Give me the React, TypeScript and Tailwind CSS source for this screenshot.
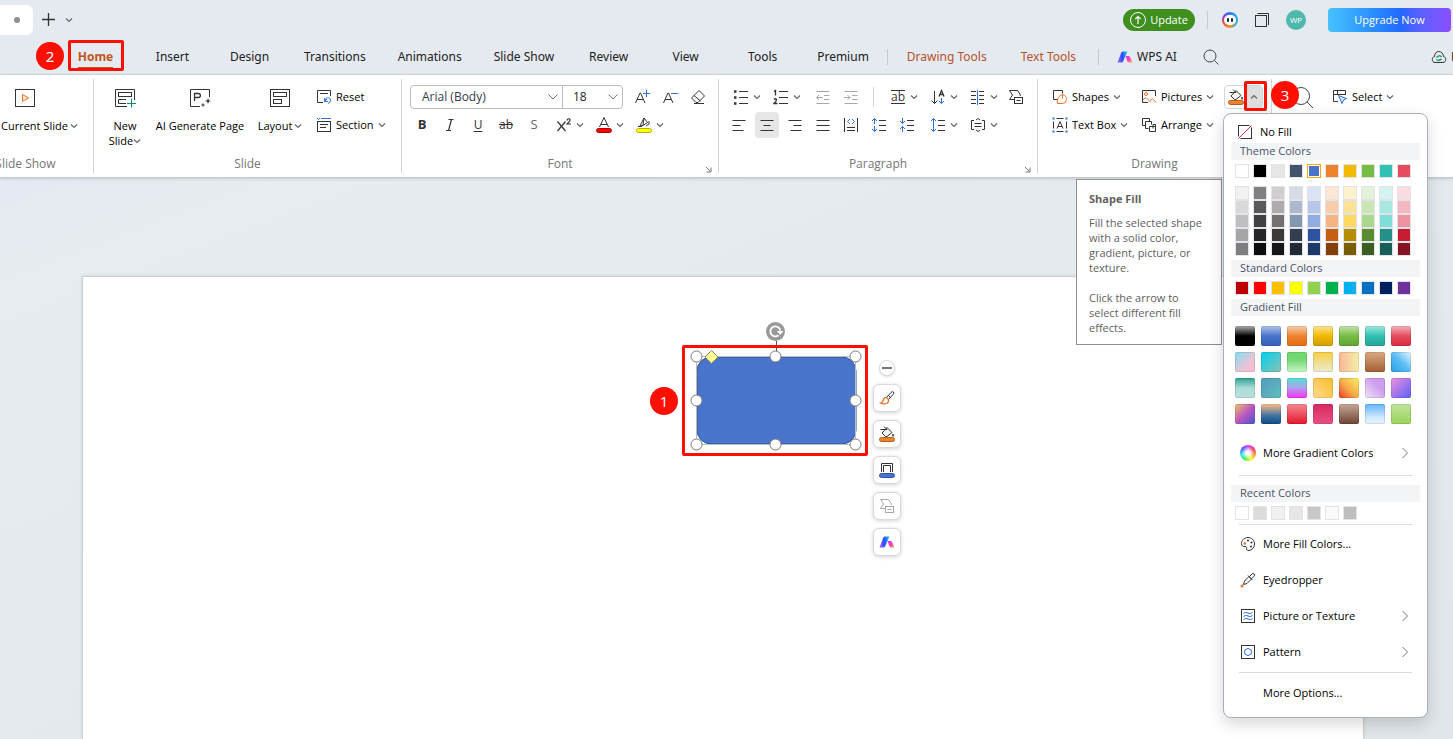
import React, { useState } from "react";

type IconProps = { children: React.ReactNode; w?: number; h?: number; color?: string };

const BLUE = "#2b6fe0";
const ORANGE = "#e5722a";

// Line icon base, one unit is one pixel
function Icon({ children, w = 16, h = 16, color = "#333" }: IconProps) {
  return (
    <svg width={w} height={h} viewBox={`0 0 ${w} ${h}`} fill="none" stroke={color} className="shrink-0" aria-hidden="true">
      {children}
    </svg>
  );
}

function Caret({ up = false }: { up?: boolean }) {
  return (
    <Icon w={8} h={6} color="#666">
      <path d={up ? "M1 4.5 4 1.5 7 4.5" : "M1 1.5 4 4.5 7 1.5"} strokeWidth="1.2" />
    </Icon>
  );
}

function ChevronRight() {
  return (
    <Icon w={8} h={12} color="#777">
      <path d="M1.5 1 6.5 6 1.5 11" />
    </Icon>
  );
}

function AiLogo() {
  return (
    <svg width="16" height="12" viewBox="0 0 16 12" className="shrink-0" aria-hidden="true">
      <defs>
        <linearGradient id="aiBlue" x1="0" y1="0.6" x2="1" y2="0.4">
          <stop offset="0" stopColor="#8a6cff" />
          <stop offset="0.5" stopColor="#2f47ff" />
          <stop offset="1" stopColor="#19c8ff" />
        </linearGradient>
        <linearGradient id="aiPink" x1="0" y1="0" x2="1" y2="1">
          <stop offset="0" stopColor="#c43cff" />
          <stop offset="0.5" stopColor="#ff3cb0" />
          <stop offset="1" stopColor="#ffb86b" />
        </linearGradient>
      </defs>
      <path d="M4.5 1Q5 .5 6 .5H10.5L6 10.5Q5.5 11.5 4.5 11.5H.5Z" fill="url(#aiBlue)" />
      <path d="M8.5 5H11.5Q12.5 5 13 6L15.5 11.5H12Q11 11.5 10.5 10.5Z" fill="url(#aiPink)" />
    </svg>
  );
}

function BucketIcon() {
  return (
    <Icon w={18} h={18}>
      <path d="M2.5 4.5H9M9 2.5 14 7.5 9 11.5H7.5L4 8 9 2.5Z" fill="#f3f3ee" />
      <path d="M6 1.5 9 4.5" />
      <path d="M15 9V11.5" strokeWidth="1.5" />
      <rect x="1.5" y="12.5" width="15" height="4" rx="2" fill="#ee822f" stroke="#b45f1a" />
    </Icon>
  );
}

function ConvertIcon({ color = "#333" }: { color?: string }) {
  return (
    <Icon color={color}>
      <path d="M7 10.5H1.5L4.5 6 1.5 1.5H9.5L12.5 6 12 7" />
      <rect x="6.5" y="8.5" width="8" height="6" />
      <path d="M8.5 11.5H12.5" />
    </Icon>
  );
}

function Badge({ n, className }: { n: number; className: string }) {
  return (
    <span
      className={`absolute z-40 flex h-7 w-7 items-center justify-center rounded-full bg-[#ff0f00] text-[15px] font-normal text-white ${className}`}
    >
      {n}
    </span>
  );
}

function Group({ label, className = "", launcher = false, children }: { label: string; className?: string; launcher?: boolean; children?: React.ReactNode }) {
  return (
    <section className={`relative my-1 flex shrink-0 flex-col border-r border-[#d4d4d4] pt-1 ${className}`}>
      <div className="h-[68px]">{children}</div>
      <div className="mt-1 text-center text-[12px] leading-[18px] text-[#767676]">{label}</div>
      {launcher && (
        <button aria-label={`${label} settings`} className="absolute right-1.5 bottom-0">
          <Icon w={7} h={7} color="#777">
            <path d="M1 1 5.5 5.5M6 1.5V6H1.5" />
          </Icon>
        </button>
      )}
    </section>
  );
}

function BigButton({ icon, children, className = "" }: { icon: React.ReactNode; children: React.ReactNode; className?: string }) {
  return (
    <button className={`flex shrink-0 flex-col items-center whitespace-nowrap ${className}`}>
      <span className="flex h-7 items-center pt-0.5">{icon}</span>
      <span className="mt-[7px] leading-[15px]">{children}</span>
    </button>
  );
}

function TextButton({ icon, label, caret = false }: { icon: React.ReactNode; label: string; caret?: boolean }) {
  return (
    <button className="flex h-7 items-center whitespace-nowrap">
      {icon}
      <span className="ml-1">{label}</span>
      {caret && (
        <span className="ml-1">
          <Caret />
        </span>
      )}
    </button>
  );
}

function Tool({ label, children, active = false }: { label: string; children: React.ReactNode; active?: boolean }) {
  return (
    <button aria-label={label} className="flex h-7 w-7 shrink-0 items-center justify-center">
      <span className={`flex h-[26px] w-6 items-center justify-center rounded ${active ? "bg-[#e6e6e6]" : ""}`}>{children}</span>
    </button>
  );
}

function SplitTool({ label, children }: { label: string; children: React.ReactNode }) {
  return (
    <button aria-label={label} className="flex h-7 w-10 shrink-0 items-center pl-1">
      <span className="flex w-6 justify-center">{children}</span>
      <Caret />
    </button>
  );
}

const tabs = ["Home", "Insert", "Design", "Transitions", "Animations", "Slide Show", "Review", "View", "Tools", "Premium"];
const contextTabs = ["Drawing Tools", "Text Tools"];

const themeColors = ["#ffffff", "#000000", "#e7e6e6", "#44546a", "#4874cb", "#ee822f", "#f2ba02", "#75bd42", "#30c0b4", "#e54c5e"];

const themeShades = [
  ["#f2f2f2", "#808080", "#d0cece", "#d6dce5", "#dae3f5", "#fce6d5", "#fff1cb", "#e3f2d9", "#d4f3f1", "#fadbdf"],
  ["#d9d9d9", "#595959", "#afabab", "#adb9ca", "#b6c7ea", "#f8cdac", "#fee396", "#c8e5b3", "#a8e8e2", "#f5b7bf"],
  ["#bfbfbf", "#404040", "#767171", "#8497b0", "#91ace0", "#f5b482", "#fed961", "#acd78e", "#7fded6", "#ef949e"],
  ["#a6a6a6", "#262626", "#3b3838", "#333f50", "#2e54a1", "#c75f10", "#b68c02", "#588e31", "#249087", "#c81d31"],
  ["#7f7f7f", "#0d0d0d", "#171717", "#222a35", "#1e386b", "#853f0b", "#795d01", "#3a5e21", "#185f5a", "#851321"],
];

const standardColors = ["#c00000", "#ff0000", "#ffc000", "#ffff00", "#92d050", "#00b050", "#00b0f0", "#0070c0", "#002060", "#7030a0"];

const recentColors = ["#ffffff", "#dcdcdc", "#f0f0f0", "#e6e6e6", "#c8c8c8", "#fafafa", "#bebebe"];

const gradients = [
  "linear-gradient(180deg,#b0b0b0,#000 50%)",
  "linear-gradient(180deg,#b0c2ea,#4874cb 50%,#3660b8)",
  "linear-gradient(180deg,#f8cfae,#ee822f 50%,#e26c12)",
  "linear-gradient(180deg,#fce496,#f2ba02 50%,#cf9e00)",
  "linear-gradient(180deg,#c4e2ae,#75bd42 50%,#63a436)",
  "linear-gradient(180deg,#a4e8e0,#30c0b4 50%,#28a297)",
  "linear-gradient(180deg,#f4b4bc,#e54c5e 50%,#dd2a40)",
  "linear-gradient(135deg,#7fdff0,#e8c4d8 60%,#ffbccc)",
  "linear-gradient(135deg,#00d2f0,#8cbfb4)",
  "linear-gradient(180deg,#70d670 35%,#c4f6c4)",
  "linear-gradient(180deg,#f8d040,#f0da80 40%,#ecead0)",
  "linear-gradient(90deg,#fbb898,#f4efa6)",
  "linear-gradient(180deg,#daa882,#a35f32)",
  "linear-gradient(45deg,#28a0e8,#5cbcf4 50%,#e8faff)",
  "linear-gradient(180deg,#2ca096,#aedcd8 50%,#b6e0dc)",
  "linear-gradient(135deg,#5898bc,#5cc0bc)",
  "linear-gradient(180deg,#50e0d8,#a8a8e8 45%,#f830f8)",
  "linear-gradient(45deg,#ffda90,#fcbc28)",
  "linear-gradient(45deg,#e83828,#f8a848 45%,#f8f060)",
  "linear-gradient(45deg,#f0e4fa,#cc9cf0 65%)",
  "linear-gradient(135deg,#f090dc,#5c60fc)",
  "linear-gradient(135deg,#f4c464,#bc58c0 50%,#4454d0)",
  "linear-gradient(180deg,#fcbc88,#3c70a0 60%,#104c84)",
  "linear-gradient(180deg,#f48890,#e4182c)",
  "linear-gradient(180deg,#d82860,#e85084)",
  "linear-gradient(180deg,#c8a898,#6c4434)",
  "linear-gradient(180deg,#64b4ff,#d4eaff 70%,#e4f2ff)",
  "linear-gradient(180deg,#c0e49c,#98d458)",
];

function Swatches({ colors, selected }: { colors: string[]; selected?: string }) {
  return (
    <div className="flex gap-1 pl-[11px]">
      {colors.map((c) => (
        <button
          key={c}
          aria-label={c}
          className={`h-[14px] w-[14px] border ${c === selected ? "border-[#ffa500] p-px" : "border-[#e1e3e8]"}`}
        >
          <span className="block h-full w-full" style={{ backgroundColor: c }} />
        </button>
      ))}
    </div>
  );
}

function MenuHeader({ children }: { children: React.ReactNode }) {
  return <h3 className="mx-[7px] bg-[#f3f4f6] pb-0.5 pl-[9px] leading-[15px] text-[#4b5468]">{children}</h3>;
}

function MenuItem({ icon, label, arrow = false }: { icon?: React.ReactNode; label: string; arrow?: boolean }) {
  return (
    <button className="flex h-9 w-full items-center pr-[18px] pl-4 text-left">
      <span className="flex w-4 justify-center">{icon}</span>
      <span className="ml-[7px] flex-1">{label}</span>
      {arrow && <ChevronRight />}
    </button>
  );
}

function FillMenu() {
  return (
    <div className="absolute top-7 -left-px z-30 w-[205px] rounded-lg border border-[#a9b0ba] bg-white pt-2 pb-1.5 text-black shadow-[0_6px_16px_rgba(0,0,0,0.16)]">
      <button className="flex h-[21px] w-full items-center pl-[14px]">
        <Icon w={15} h={15}>
          <rect x="0.5" y="0.5" width="13" height="13" />
          <path d="M0 14 14 0" stroke="#fff" strokeWidth="3" />
          <path d="M.5 13.5 13.5 .5" stroke="#d9304c" />
        </Icon>
        <span className="ml-[7px]">No Fill</span>
      </button>
      <MenuHeader>Theme Colors</MenuHeader>
      <div className="mt-1">
        <Swatches colors={themeColors} selected="#4874cb" />
      </div>
      <div className="mt-2 flex flex-col">
        {themeShades.map((row) => (
          <Swatches key={row[0]} colors={row} />
        ))}
      </div>
      <div className="mt-1">
        <MenuHeader>Standard Colors</MenuHeader>
      </div>
      <div className="mt-1 mb-1">
        <Swatches colors={standardColors} />
      </div>
      <MenuHeader>Gradient Fill</MenuHeader>
      <div className="mt-[10px] mb-[11px] flex flex-wrap gap-1.5 pl-[11px]">
        {gradients.map((g) => (
          <button key={g} aria-label="Gradient" className="h-5 w-5 rounded-xs border border-black/10 bg-origin-border" style={{ backgroundImage: g }} />
        ))}
      </div>
      <MenuItem
        label="More Gradient Colors"
        arrow
        icon={
          <span className="h-4 w-4 shrink-0 rounded-full bg-[radial-gradient(circle,#fff_15%,transparent_60%),conic-gradient(#d040ff,#ff3060,#ff9030,#f0ff30,#40f040,#30e0f0,#4060ff,#d040ff)]" />
        }
      />
      <hr className="mx-[15px] mt-1 mb-[9px] border-[#d9dbde]" />
      <MenuHeader>Recent Colors</MenuHeader>
      <div className="my-1">
        <Swatches colors={recentColors} />
      </div>
      <hr className="mx-[15px] mb-px border-[#d9dbde]" />
      <MenuItem
        label="More Fill Colors..."
        icon={
          <Icon>
            <path d="M8 1.5C4 1.5 1.5 4.5 1.5 7.5C1.5 10 3.5 11 5 10.5C6.5 10.2 6.8 11.5 6.5 12.5C6.5 14 7.5 14.5 9 14.5C12 14 14.5 11.5 14.5 8C14.5 4 11.5 1.5 8 1.5Z" />
            <g stroke="none" fill="#333">
              <circle cx="8" cy="4.5" r="1" />
              <circle cx="11.5" cy="6.5" r="1" />
              <circle cx="11" cy="10.5" r="1" />
              <circle cx="4.8" cy="7.5" r="1.3" fill={ORANGE} />
            </g>
          </Icon>
        }
      />
      <MenuItem
        label="Eyedropper"
        icon={
          <Icon>
            <path d="M3.5 12.5 4.5 9 9 4.5 11.5 7 7 11.5ZM8 3.5 12.5 8M9.5 4.5 12 2Q13 1 14.2 2Q15.2 3.2 14 4.3L11.8 6.5" />
            <circle cx="2" cy="14" r="1.5" fill={ORANGE} stroke="none" />
          </Icon>
        }
      />
      <MenuItem
        label="Picture or Texture"
        arrow
        icon={
          <Icon>
            <rect x="1.5" y="1.5" width="13" height="13" />
            <path d="M3.5 5.5Q5.5 3.5 8 5T12.5 4.5M3.5 8.5Q5.5 6.5 8 8T12.5 7.5M3.5 11.5Q5.5 9.5 8 11T12.5 10.5" stroke={BLUE} />
          </Icon>
        }
      />
      <MenuItem
        label="Pattern"
        arrow
        icon={
          <Icon>
            <rect x="1.5" y="1.5" width="13" height="13" />
            <path d="M8 4.3 11.3 6.2V9.8L8 11.7 4.7 9.8V6.2Z" stroke={BLUE} />
          </Icon>
        }
      />
      <hr className="mx-[15px] my-0.5 border-[#d9dbde]" />
      <MenuItem label="More Options..." />
    </div>
  );
}

function FillTooltip() {
  return (
    <div role="tooltip" className="absolute top-[94px] right-[41px] z-20 w-[146px] border border-[#8f8f8f] bg-white px-3 pt-[11px] pb-[9px] leading-[15px] text-[#606060]">
      <p className="font-bold">Shape Fill</p>
      <p className="mt-[9px]">Fill the selected shape with a solid color, gradient, picture, or texture.</p>
      <p className="mt-[15px]">Click the arrow to select different fill effects.</p>
    </div>
  );
}

function TitleBar() {
  return (
    <header className="flex h-10 shrink-0 items-center">
      <div className="flex h-[30px] w-[33px] items-center justify-center rounded-r-md bg-white">
        <span className="h-1.5 w-1.5 rounded-full bg-[#909090]" />
      </div>
      <button aria-label="New tab" className="ml-2">
        <Icon>
          <path d="M7.5 1V14M1 7.5H14" strokeWidth="1.3" />
        </Icon>
      </button>
      <button aria-label="Tab list" className="ml-2">
        <Caret />
      </button>
      <button className="ml-auto flex h-[22px] w-[72px] items-center justify-center gap-1 rounded-full bg-[#3f8f1f] text-white">
        <Icon color="#fff">
          <circle cx="8" cy="8" r="7.5" />
          <path d="M8 12V4.5M5.3 7 8 4.5 10.7 7" strokeWidth="1.2" />
        </Icon>
        Update
      </button>
      <span className="ml-3 h-[18px] w-px bg-[#c6cacf]" />
      <button aria-label="Assistant" className="ml-[14px] flex h-4 w-4 items-center justify-center rounded-full bg-[conic-gradient(#2f7bf0,#20a8e8,#30b0c8,#f09838,#f0503c,#8a40d8,#2f7bf0)]">
        <span className="flex h-2.5 w-3 items-center justify-center gap-0.5 rounded-full bg-white">
          <span className="h-1 w-0.5 rounded-full bg-[#223]" />
          <span className="h-1 w-0.5 rounded-full bg-[#223]" />
        </span>
      </button>
      <button aria-label="Windows" className="ml-4">
        <Icon>
          <rect x="1.5" y="3.5" width="11" height="11" />
          <path d="M3.5 1.5H14.5V13" />
        </Icon>
      </button>
      <span className="ml-4 flex h-5 w-5 items-center justify-center rounded-full bg-[#4db8ac] text-[8px] text-white">WP</span>
      <button className="mr-0.5 ml-[22px] h-6 w-[123px] rounded bg-linear-to-r from-[#48c2ff] via-[#2468ff] via-60% to-[#8a4dff] text-white">Upgrade Now</button>
    </header>
  );
}

function TabBar() {
  return (
    <nav className="flex h-[34px] shrink-0 items-center overflow-x-clip pl-[57px] font-['Noto_Sans',sans-serif] text-[12px] text-[#222]">
      {tabs.map((tab) =>
        tab === "Home" ? (
          <div key={tab} className="relative flex h-full min-w-[77px] items-center justify-center">
            <a href="#home" className="relative font-bold text-[#c2571a]">
              {tab}
              <span className="absolute inset-x-0 -bottom-[3px] h-0.5 bg-[#c2571a]" />
            </a>
            <span className="absolute top-0 left-[11px] h-[31px] w-14 rounded-xs border-3 border-[#ff0f00]" />
            <Badge n={2} className="top-0.5 -left-[21px]" />
          </div>
        ) : (
          <a key={tab} href="#tab" className="min-w-[77px] px-4 text-center whitespace-nowrap">
            {tab}
          </a>
        ),
      )}
      <span className="mr-0.5 ml-0.5 h-4 w-px bg-[#c6cacf]" />
      {contextTabs.map((tab) => (
        <a key={tab} href="#context" className="px-[17px] whitespace-nowrap text-[#b5532a]">
          {tab}
        </a>
      ))}
      <span className="ml-[5px] h-4 w-px bg-[#c6cacf]" />
      <button className="ml-[18px] flex items-center gap-1 whitespace-nowrap">
        <AiLogo />
        WPS AI
      </button>
      <button aria-label="Search" className="ml-[26px]">
        <Icon color="#444">
          <circle cx="7" cy="7" r="6" />
          <path d="M11.5 11.5 15.5 15.5" />
        </Icon>
      </button>
      <button aria-label="Cloud sync" className="-mr-2.5 ml-auto flex items-center gap-1">
        <Icon>
          <path d="M4 13.5C.5 13.5 .5 8 3.5 7.5C3.5 .8 12 .8 12.5 7.5C15.5 8 15.5 13.5 12 13.5Z" />
          <path d="M5.5 8.5Q8 5.5 10.5 8M10.5 10Q8 12.5 5.5 10.5" stroke="#1f9d63" strokeWidth="1.5" />
        </Icon>
        <span className="w-3">File</span>
      </button>
    </nav>
  );
}

function SlideGroup() {
  return (
    <Group label="Slide" className="w-[308px]">
      <div className="flex pl-[9px]">
        <BigButton
          className="w-11"
          icon={
            <Icon w={22} h={20}>
              <path d="M13 18.5H1.5V1.5H20.5V12" />
              <rect x="4.5" y="4.5" width="13" height="4" />
              <path d="M12 11.5H4.5V15.5H12" />
              <path d="M17.5 10.5V19.5M13 15.5H22" stroke="#0b8f62" />
            </Icon>
          }
        >
          New
          <br />
          <span className="inline-flex items-center">
            Slide
            <Caret />
          </span>
        </BigButton>
        <BigButton
          className="w-[106px]"
          icon={
            <Icon w={24} h={20}>
              <path d="M12 18.5H2.5V1.5H21.5V9" />
              <path d="M6.5 13V5.5H10.5C13 5.5 13 9.5 10.5 9.5H6.5" strokeWidth="1.3" />
              <path d="M20 10 20.8 12.2 23 13 20.8 13.8 20 16 19.2 13.8 17 13 19.2 12.2ZM15 14.5 15.6 16.4 17.5 17 15.6 17.6 15 19.5 14.4 17.6 12.5 17 14.4 16.4Z" fill="#333" stroke="none" />
            </Icon>
          }
        >
          AI Generate Page
        </BigButton>
        <BigButton
          className="w-[54px]"
          icon={
            <Icon w={22} h={20}>
              <rect x="1.5" y="1.5" width="19" height="17" />
              <rect x="4.5" y="4.5" width="13" height="4" />
              <rect x="4.5" y="11.5" width="8" height="4" />
            </Icon>
          }
        >
          <span className="flex items-center gap-0.5">
            Layout
            <Caret />
          </span>
        </BigButton>
        <div className="ml-[9px]">
          <TextButton
            label="Reset"
            icon={
              <Icon>
                <path d="M7 13.5H1.5V1.5H14.5V7M4 4.5H12" />
                <path d="M8.5 12.5 11 10M8.5 12.5H12M8.5 12.5V9M9 12C9 8 14.5 7.5 14.5 11Q14.5 13.5 12 14.5" stroke={BLUE} />
              </Icon>
            }
          />
          <TextButton
            label="Section"
            caret
            icon={
              <Icon>
                <path d="M5 1.5H15M1 1 2.5 2.5 4 1" stroke={BLUE} />
                <rect x="1.5" y="4.5" width="13" height="10" />
                <path d="M4 7.5H12M4 10.5H10" />
              </Icon>
            }
          />
        </div>
      </div>
    </Group>
  );
}

function FontGroup() {
  return (
    <Group label="Font" launcher className="w-[317px]">
      <div className="flex h-7 items-center pl-2">
        <div className="mr-[5px] flex h-6 w-[213px] rounded border border-[#bdbdbd] text-[12px] text-[#333a4a]">
          <label className="relative flex-1">
            <select aria-label="Font name" className="h-full w-full appearance-none pl-[11px]">
              <option>Arial (Body)</option>
            </select>
            <span className="pointer-events-none absolute top-2 right-1">
              <Icon w={10} h={6} color="#777">
                <path d="M.5 .5 5 5 9.5 .5" />
              </Icon>
            </span>
          </label>
          <label className="relative w-[60px] border-l border-[#bdbdbd] text-[#222]">
            <select aria-label="Font size" className="h-full w-full appearance-none pl-[10px]">
              <option>18</option>
            </select>
            <span className="pointer-events-none absolute top-2 right-1">
              <Icon w={10} h={6} color="#777">
                <path d="M.5 .5 5 5 9.5 .5" />
              </Icon>
            </span>
          </label>
        </div>
        <Tool label="Increase font size">
          <Icon>
            <path d="M1.5 14 6 4H6.5L11 14M3 10.5H9.5" />
            <path d="M12.5 1V8M9 4.5H16" stroke={BLUE} />
          </Icon>
        </Tool>
        <Tool label="Decrease font size">
          <Icon>
            <path d="M1.5 14 6 4H6.5L11 14M3 10.5H9.5" />
            <path d="M9 4.5H16" stroke={BLUE} />
          </Icon>
        </Tool>
        <Tool label="Clear formatting">
          <Icon>
            <path d="M1.5 9 9 1.5 14.5 7 8 13.5H6ZM4 6.5 10.5 12M4 14.5H14" />
          </Icon>
        </Tool>
      </div>
      <div className="flex h-7 items-center pl-1.5 text-[12px] text-[#333]">
        <Tool label="Bold">
          <b className="text-[13px]">B</b>
        </Tool>
        <Tool label="Italic">
          <Icon>
            <path d="M6.5 2.5H11.5M4 13.5H9M9.5 2.5 6.5 13.5" strokeWidth="1.2" />
          </Icon>
        </Tool>
        <Tool label="Underline">
          <span className="underline underline-offset-2">U</span>
        </Tool>
        <Tool label="Strikethrough">
          <span className="line-through">ab</span>
        </Tool>
        <Tool label="Shadow">
          <span className="text-[13px] text-[#666]">S</span>
        </Tool>
        <SplitTool label="Superscript">
          <Icon>
            <path d="M1.5 4.5 9.5 14M9.5 4.5 1.5 14" strokeWidth="1.2" />
            <path d="M11 3.5Q11.5 1.5 13 1.8Q14.8 2.5 13.5 4.3L11 7H15" strokeWidth="1.2" />
          </Icon>
        </SplitTool>
        <SplitTool label="Font color">
          <Icon w={18} h={18}>
            <path d="M4.5 11 9 1.5 13.5 11M6 8.5H12" />
            <rect x="1.5" y="12.5" width="15" height="4" rx="2" fill="#f00" stroke="#b00000" />
          </Icon>
        </SplitTool>
        <SplitTool label="Highlight">
          <Icon w={18} h={18}>
            <path d="M3 10.5H7M5 10 9 2 12.5 6.5 8 9.5 5 10M9 2 8 9M14 5V8L11 10" />
            <rect x="1.5" y="12.5" width="15" height="4" rx="2" fill="#ff0" stroke="#b5b500" />
          </Icon>
        </SplitTool>
      </div>
    </Group>
  );
}

function ParagraphGroup() {
  return (
    <Group label="Paragraph" launcher className="w-[319px]">
      <div className="flex h-7 items-center pl-1.5">
        <SplitTool label="Bullets">
          <Icon>
            <path d="M6 2.5H15M6 8.5H15M6 14.5H15" />
            <path d="M1 2.5H3.5M1 8.5H3.5M1 14.5H3.5" strokeWidth="2.5" />
          </Icon>
        </SplitTool>
        <SplitTool label="Numbering">
          <Icon>
            <path d="M6 2.5H15M6 8.5H15M6 14.5H15" />
            <path d="M1 2.5 2.5 1.5V6.5M1 10.5Q2.5 9 3.5 10.5Q3.8 11.5 1 14.5H4.5" strokeWidth="1.3" />
          </Icon>
        </SplitTool>
        <span className="w-1" />
        <Tool label="Decrease indent">
          <Icon color="#a8a8a8">
            <path d="M1.5 2.5H14.5M9 6.5H14.5M9 10.5H14.5M1.5 14.5H14.5M1.5 8.5H7.5M4 6 1.5 8.5 4 11" />
          </Icon>
        </Tool>
        <Tool label="Increase indent">
          <Icon color="#a8a8a8">
            <path d="M1.5 2.5H14.5M9 6.5H14.5M9 10.5H14.5M1.5 14.5H14.5M1 8.5H7M4.5 6 7 8.5 4.5 11" />
          </Icon>
        </Tool>
        <span className="mx-2 h-5 w-px bg-[#d4d4d4]" />
        <SplitTool label="Text direction">
          <span className="w-[14px] border-y border-[#333] text-center text-[12px] leading-[12px] text-[#333]">ab</span>
        </SplitTool>
        <SplitTool label="Sort">
          <Icon>
            <path d="M4.5 2V14.5M1.5 11.5 4.5 14.5 7.5 11.5" />
            <path d="M9 7.5 11.5 1.5 14 7.5M10 5.5H13" strokeWidth="1.3" />
            <path d="M11.5 9V14.5M9 12 11.5 14.5 14 12" stroke={BLUE} />
          </Icon>
        </SplitTool>
        <SplitTool label="Columns">
          <Icon>
            <path d="M1 2.5H6M1 6.5H6M1 10.5H6M1 14.5H6M9 2.5H14M9 6.5H14M9 10.5H14M9 14.5H14" />
            <path d="M7.5 1V16" stroke={BLUE} />
          </Icon>
        </SplitTool>
        <Tool label="Convert to diagram">
          <ConvertIcon />
        </Tool>
      </div>
      <div className="flex h-7 items-center pl-1.5">
        <Tool label="Align left">
          <Icon>
            <path d="M1.5 3.5H14.5M1.5 8.5H9.5M1.5 13.5H12.5" />
          </Icon>
        </Tool>
        <Tool label="Center" active>
          <Icon>
            <path d="M1.5 3.5H14.5M4.5 8.5H11.5M1.5 13.5H14.5" />
          </Icon>
        </Tool>
        <Tool label="Align right">
          <Icon>
            <path d="M1.5 3.5H14.5M6.5 8.5H14.5M3.5 13.5H14.5" />
          </Icon>
        </Tool>
        <Tool label="Justify">
          <Icon>
            <path d="M1.5 3.5H14.5M1.5 8.5H14.5M1.5 13.5H14.5" />
          </Icon>
        </Tool>
        <Tool label="Distribute">
          <Icon>
            <path d="M1.5 1V15M14.5 1V15M4 10.5H12M4 13.5H12" />
            <path d="M7 2 4.5 4.5 7 7M9 2 11.5 4.5 9 7" stroke={BLUE} />
          </Icon>
        </Tool>
        <Tool label="Increase spacing">
          <Icon>
            <path d="M8 3.5H15M8 8.5H15M8 13.5H15" />
            <path d="M3.5 7V1.5M1 4 3.5 1.5 6 4M3.5 9V14.5M1 12 3.5 14.5 6 12" stroke={BLUE} />
          </Icon>
        </Tool>
        <Tool label="Decrease spacing">
          <Icon>
            <path d="M8 3.5H15M8 8.5H15M8 13.5H15" />
            <path d="M3.5 1V6.5M1 4 3.5 6.5 6 4M3.5 15V9.5M1 12 3.5 9.5 6 12" stroke={BLUE} />
          </Icon>
        </Tool>
        <span className="w-px" />
        <SplitTool label="Line spacing">
          <Icon>
            <path d="M8 3.5H15M8 8.5H15M8 13.5H15" />
            <path d="M3.5 1.5V14.5M1 4 3.5 1.5 6 4M1 12 3.5 14.5 6 12" stroke={BLUE} />
          </Icon>
        </SplitTool>
        <SplitTool label="Align text">
          <Icon>
            <path d="M4 3.5H1.5V12.5H4M12 3.5H14.5V12.5H12M4.5 6.5H11.5M4.5 9.5H11.5M6 3 8 1.5 10 3M6 13 8 14.5 10 13" />
          </Icon>
        </SplitTool>
      </div>
    </Group>
  );
}

function DrawingGroup() {
  const [open, setOpen] = useState(true);

  return (
    <Group label="Drawing" className="w-[234px]">
      <div className="flex pl-[14px]">
        <div className="w-[89px]">
          <TextButton
            label="Shapes"
            caret
            icon={
              <Icon>
                <path d="M5.5 10.5H1.5V1.5H10.5V4.5" />
                <path d="M10.5 14.5H5.5C4.5 10 7 6.5 10.5 5.5V9.5M10.5 5.5C13.5 6.5 14.5 8 14.5 10.5Q14.5 14.5 10.5 14.5" stroke={ORANGE} />
              </Icon>
            }
          />
          <TextButton
            label="Text Box"
            caret
            icon={
              <Icon>
                <path d="M1.5 4.5V11.5M14.5 4.5V11.5M4.5 1.5H11.5M4.5 14.5H11.5M5 11.5 8 4.5 11 11.5M6 9.5H10" />
                <path d="M.5 1.5H2.5M13.5 1.5H15.5M.5 14.5H2.5M13.5 14.5H15.5" stroke={BLUE} strokeWidth="2" />
              </Icon>
            }
          />
        </div>
        <div className="w-[83px]">
          <TextButton
            label="Pictures"
            caret
            icon={
              <Icon>
                <path d="M7 13.5H1.5V1.5H14.5V7" />
                <circle cx="5" cy="5" r="1.5" stroke={ORANGE} />
                <path d="M2 10.5 5 8.5 10 13.5M9 11.5 11.5 9.5 15 13.5" stroke={ORANGE} />
              </Icon>
            }
          />
          <TextButton
            label="Arrange"
            caret
            icon={
              <Icon>
                <path d="M4.5 8.5H1.5V1.5H8.5V4.5M10.5 7.5V4.5H4.5V11.5H7.5M12 11.5V7.5H14.5V14.5H8.5V9.5H14" />
              </Icon>
            }
          />
        </div>
        <div className="relative mt-0.5 h-6">
          <div className="flex h-6 w-[39px] overflow-hidden rounded border border-[#d4d4d4]">
            <button aria-label="Shape fill" className="flex flex-1 items-center justify-center pl-0.5">
              <BucketIcon />
            </button>
            <button aria-label="Fill options" aria-expanded={open} className="flex w-[17px] items-center justify-center bg-[#dedede]" onClick={() => setOpen(!open)}>
              <Caret up />
            </button>
          </div>
          <span className="pointer-events-none absolute -top-1 left-5 z-10 h-[30px] w-[23px] rounded-xs border-3 border-[#ff0f00]" />
          <Badge n={3} className="-top-1 left-[47px]" />
          {open && <FillTooltip />}
          {open && <FillMenu />}
        </div>
      </div>
    </Group>
  );
}

function Ribbon() {
  return (
    <div className="relative z-10 flex h-[104px] shrink-0 border-y border-t-[#cfd3d8] border-b-[#c3c8cd] bg-white text-black shadow-[0_1px_3px_rgba(0,0,0,0.14)]">
      {/* First group is scrolled partly out on the left */}
      <Group label="Slide Show" className="-ml-[42px] w-[136px]">
        <div className="flex pl-[43px]">
          <BigButton
            icon={
              <span className="pr-7">
                <Icon w={22} h={20}>
                  <rect x="1.5" y="1.5" width="19" height="17" />
                  <path d="M8.5 6.5 14.5 10 8.5 13.5Z" stroke={ORANGE} fill="#fde6d8" />
                </Icon>
              </span>
            }
          >
            <span className="flex items-center gap-0.5">
              Current Slide
              <Caret />
            </span>
          </BigButton>
        </div>
      </Group>
      <SlideGroup />
      <FontGroup />
      <ParagraphGroup />
      <DrawingGroup />
      <div className="flex pt-2">
        <button aria-label="Find" className="ml-[18px] flex h-7 items-center">
          <Icon w={24} h={24} color="#444">
            <circle cx="11" cy="11" r="8.5" />
            <path d="M17 17 23 23" />
          </Icon>
        </button>
        <div className="ml-[18px]">
          <TextButton
            label="Select"
            caret
            icon={
              <Icon>
                <path d="M6 12.5H1.5V1.5H13.5V6M1.5 5.5H13.5M5.5 5.5V1.5" />
                <path d="M6.5 6.5 14.5 9.5 11.5 11 10 14.5Z" stroke={BLUE} fill="#dbe8ff" />
              </Icon>
            }
          />
        </div>
      </div>
    </div>
  );
}

const handles = [
  [14.5, 45.5], [93.5, 45.5], [173.5, 45.5],
  [14.5, 89.5], [173.5, 89.5],
  [14.5, 133.5], [93.5, 133.5], [173.5, 133.5],
];

function SelectedShape() {
  return (
    <svg width="187" height="146" viewBox="0 0 187 146" className="absolute top-[34px] left-0" aria-label="Rounded rectangle">
      <rect x="15" y="46" width="159" height="87" rx="14" fill="#4874cb" stroke="#31538f" />
      <rect x="14.5" y="45.5" width="159" height="88" fill="none" stroke="#b9bdc4" />
      <path d="M94.5 30V46" stroke="#555" />
      <circle cx="93.5" cy="20.5" r="9.5" fill="#999" />
      <path d="M96.5 24.3A5 5 0 1 1 98.3 19.5" fill="none" stroke="#fff" strokeWidth="1.8" />
      <path d="M94.8 20H101.5L98.2 23.800Z" fill="#fff" />
      {handles.map(([x, y]) => (
        <circle key={`${x}-${y}`} cx={x} cy={y} r="5.5" fill="#fff" stroke="#777" />
      ))}
      <path d="M29.5 39.5 36 46 29.5 52.5 23 46Z" fill="#ffff96" stroke="#8a8a50" />
    </svg>
  );
}

function FloatTool({ label, children }: { label: string; children: React.ReactNode }) {
  return (
    <button aria-label={label} className="flex h-7 w-7 items-center justify-center rounded-md border border-[#dadada] bg-white shadow-[0_1px_4px_rgba(0,0,0,0.18)]">
      {children}
    </button>
  );
}

function Workspace() {
  return (
    <main className="flex flex-1 bg-linear-to-br from-[#e5e9f2] via-[#e7ecf0] via-10% to-[#e0e6ea] pt-[98px] pr-[89px] pl-[82px]">
      <div className="relative flex-1 border border-b-0 border-[#cbd0d4] bg-white shadow-[0_0_3px_rgba(0,0,0,0.12)]">
        {/* Selected object on the slide */}
        <div className="absolute top-0 left-[599px]">
          <SelectedShape />
          <span className="absolute top-[68px] left-0 h-[111px] w-[186px] rounded-xs border-3 border-[#ff0f00]" />
          <Badge n={1} className="top-[110px] -left-8" />
          <div className="absolute top-[83px] left-[191px] flex flex-col items-center gap-2">
            <button aria-label="Collapse" className="flex h-4 w-4 items-center justify-center rounded-full border border-[#dadada] bg-white shadow-sm">
              <span className="h-0.5 w-2.5 bg-[#777]" />
            </button>
            <FloatTool label="Format painter">
              <Icon>
                <path d="M7.5 7.5 12 2.5Q13.5 1 14.5 2T14 4.5L9.5 9.5ZM9.5 5.5 11.5 7.5" />
                <path d="M7.5 7.5Q5 7 4.5 9.5Q4 12.5 1.5 13Q4.5 14.5 7.5 13.5Q10 12.5 9.5 9.5Z" stroke={ORANGE} strokeWidth="1.3" />
              </Icon>
            </FloatTool>
            <FloatTool label="Fill">
              <BucketIcon />
            </FloatTool>
            <FloatTool label="Outline">
              <Icon w={18} h={18}>
                <path d="M3.5 11V2.5H14.5V11M5.5 11V4.5H12.5V11" />
                <rect x="1.5" y="12.5" width="15" height="4" rx="2" fill="#4874cb" stroke="#2e54a1" />
              </Icon>
            </FloatTool>
            <FloatTool label="Convert">
              <ConvertIcon color="#a8a8a8" />
            </FloatTool>
            <FloatTool label="WPS AI tools">
              <AiLogo />
            </FloatTool>
          </div>
        </div>
      </div>
    </main>
  );
}

export default function App(): React.ReactElement {
  return (
    <div className="flex min-h-screen flex-col overflow-hidden bg-[#e5e9f0] font-['Open_Sans','Noto_Sans',sans-serif] text-[11px]">
      <TitleBar />
      <TabBar />
      <Ribbon />
      <Workspace />
    </div>
  );
}
